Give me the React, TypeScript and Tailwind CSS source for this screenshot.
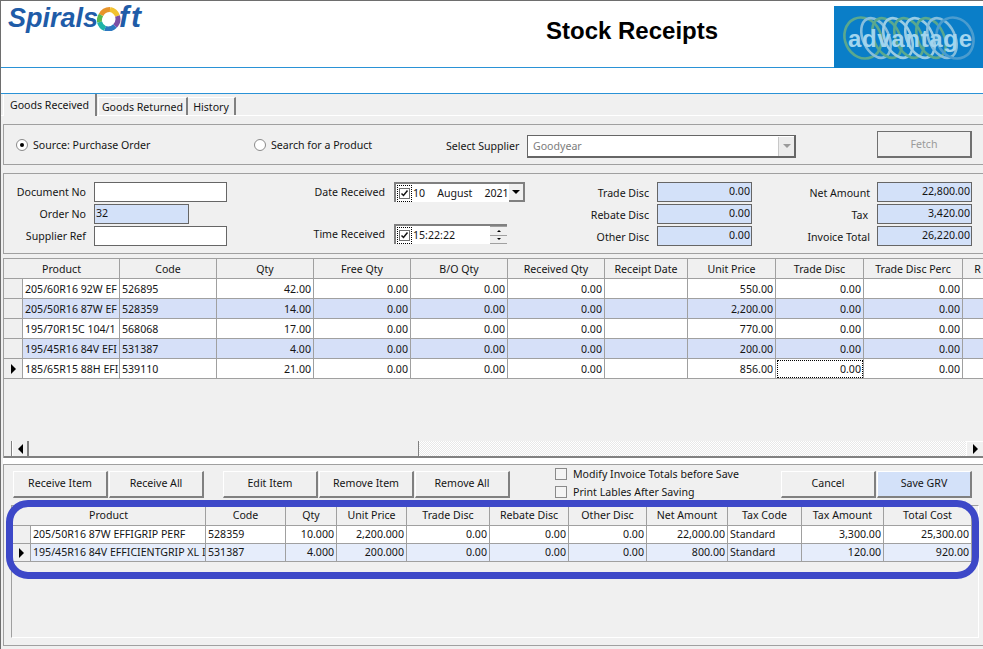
import React from "react";

const BTN =
  "h-[27px] w-[95px] shrink-0 border-t border-l border-t-white border-l-white border-r-2 border-b-2 border-r-[#808080] border-b-[#808080] flex items-center justify-center pb-[2px]";

function Btn({ label, blue, className = "" }: { label: string; blue?: boolean; className?: string }) {
  return <div className={`${BTN} ${blue ? "bg-[#d3e1f9]" : "bg-[#f0f0f0]"} ${className}`}>{label}</div>;
}

function Radio({ on }: { on?: boolean }) {
  return (
    <span className="w-[12px] h-[12px] rounded-full bg-white border border-[#8a8a8a] flex items-center justify-center shrink-0">
      {on && <span className="w-[4px] h-[4px] rounded-full bg-black" />}
    </span>
  );
}

function Check() {
  return (
    <span className="relative w-[15px] h-[17px] flex items-center justify-center border border-dotted border-black shrink-0">
      <span className="w-[11px] h-[11px] border border-[#6e6e6e] bg-white flex items-center justify-center">
        <svg width="9" height="9" viewBox="0 0 9 9">
          <path d="M1.5 4.5 L3.5 6.5 L7.5 1.5" fill="none" stroke="#111" strokeWidth="1.5" />
        </svg>
      </span>
    </span>
  );
}

function Field({ w, blue, text, right }: { w: string; blue?: boolean; text?: string; right?: boolean }) {
  return (
    <div
      className={`${w} h-[20px] border border-[#666] ${blue ? "bg-[#d3e1f9]" : "bg-white"} ${
        right ? "text-right pr-[1px]" : "pl-[1px]"
      } leading-[16px]`}
    >
      {text}
    </div>
  );
}

function SpiralLogo() {
  return (
    <div className="flex items-start font-['Liberation_Sans'] font-bold italic text-[27px] leading-[32px] text-[#1f5ca8]">
      <span>Spirals</span>
      <svg width="24" height="24" viewBox="0 0 24 24" className="mt-[5px] -ml-[1px] shrink-0">
        <g fill="none" strokeWidth="5">
          <path d="M4 8 A10 10 0 0 1 13 2.5" stroke="#e8942a" />
          <path d="M13 2.5 A10 10 0 0 1 20.5 9" stroke="#f2c230" />
          <path d="M20.5 9 A10 10 0 0 1 18 19" stroke="#7a4fa6" />
          <path d="M18 19 A10 10 0 0 1 8 21.5" stroke="#2c78c0" />
          <path d="M8 21.5 A10 10 0 0 1 2.5 15" stroke="#1eb3a8" />
          <path d="M2.5 15 A10 10 0 0 1 4 8" stroke="#58b84e" />
        </g>
      </svg>
      <span className="text-[30px] tracking-[2px] -ml-[2px] -mt-[1px]">ft</span>
    </div>
  );
}

function AdvantageLogo() {
  const rings = [
    { x: 29, rx: 18, c: "#5aa88e" },
    { x: 42, rx: 13, c: "#86bedc" },
    { x: 53, rx: 13, c: "#5aa88e" },
    { x: 64, rx: 13, c: "#9accE4" },
    { x: 75, rx: 13, c: "#5aa88e" },
    { x: 86, rx: 13, c: "#9accE4" },
    { x: 97, rx: 13, c: "#5aa88e" },
    { x: 108, rx: 13, c: "#86bedc" },
    { x: 121, rx: 18, c: "#4a9ccf" },
  ];
  return (
    <svg width="149" height="62" viewBox="0 0 149 62" className="block bg-[#0a7ec8] shrink-0">
      {rings.map((r) => (
        <ellipse
          key={r.x}
          cx={r.x}
          cy="32"
          rx={r.rx}
          ry="21"
          fill="none"
          stroke={r.c}
          strokeWidth="2.6"
          transform={`rotate(-25 ${r.x} 32)`}
        />
      ))}
      <text
        x="14"
        y="41"
        textLength="124"
        fontFamily="Liberation Sans"
        fontWeight="700"
        fontSize="24"
        fill="#a2d5ee"
      >
        advantage
      </text>
    </svg>
  );
}

const topHead = [
  "Code",
  "Qty",
  "Free Qty",
  "B/O Qty",
  "Received Qty",
  "Receipt Date",
  "Unit Price",
  "Trade Disc",
  "Trade Disc Perc",
  "R",
];

const topRows = [
  ["205/60R16 92W EF", "526895", "42.00", "550.00"],
  ["205/50R16 87W EF", "528359", "14.00", "2,200.00"],
  ["195/70R15C 104/1", "568068", "17.00", "770.00"],
  ["195/45R16 84V EFI", "531387", "4.00", "200.00"],
  ["185/65R15 88H EFI", "539110", "21.00", "856.00"],
];

const CELL = "border-r border-b border-[#a0a0a0] overflow-hidden whitespace-nowrap flex items-center";
const TOPCOLS = "grid grid-cols-[19px_97px_97px_97px_97px_97px_97px_83px_88px_88px_99px_30px]";
const BOTCOLS = "grid grid-cols-[19px_175px_80px_51px_70px_83px_79px_78px_81px_74px_82px_88px]";

function Arrow({ className = "" }: { className?: string }) {
  return <span className={`w-0 h-0 border-y-[5px] border-y-transparent border-l-[5px] border-l-black ${className}`} />;
}

function TopGrid() {
  return (
    <div className="h-[200px] ml-[3px] border-l border-t border-[#a0a0a0] flex flex-col overflow-hidden">
      <div className={`${TOPCOLS} h-[20px] shrink-0 w-[990px]`}>
        <div className={`${CELL} col-span-2 justify-center`}>Product</div>
        {topHead.map((h) => (
          <div key={h} className={`${CELL} justify-center`}>
            {h}
          </div>
        ))}
      </div>
      {topRows.map((r, i) => {
        const bg = i % 2 ? "bg-[#d6e0f8]" : "bg-white";
        const num = `${CELL} ${bg} justify-end pr-[2px]`;
        return (
          <div key={r[1]} className={`${TOPCOLS} h-[20px] shrink-0 w-[990px]`}>
            <div className={`${CELL} justify-center bg-[#f0f0f0]`}>{i === 4 && <Arrow />}</div>
            <div className={`${CELL} ${bg} pl-[2px]`}>{r[0]}</div>
            <div className={`${CELL} ${bg} pl-[2px]`}>{r[1]}</div>
            <div className={num}>{r[2]}</div>
            <div className={num}>0.00</div>
            <div className={num}>0.00</div>
            <div className={num}>0.00</div>
            <div className={num} />
            <div className={num}>{r[3]}</div>
            <div className={`${num} ${i === 4 ? "outline-1 outline-dotted outline-black -outline-offset-2" : ""}`}>0.00</div>
            <div className={num}>0.00</div>
            <div className={num} />
          </div>
        );
      })}
      <div className="flex-1" />
      <div className="h-[17px] shrink-0 flex border-b-2 border-[#808080]">
        <div className="w-[8px] border-r border-[#808080] bg-[#f0f0f0]" />
        <div className="w-[17px] border-l border-l-white border-r-2 border-r-[#808080] bg-[#f0f0f0] flex items-center justify-center">
          <Arrow className="rotate-180" />
        </div>
        <div className="w-[390px] bg-[#f0f0f0] border-r border-[#808080]" />
        <div className="flex-1 bg-[repeating-conic-gradient(#e8e8e8_0_25%,#ffffff_0_50%)] bg-[length:2px_2px]" />
        <div className="w-[17px] border-l border-l-white border-t border-t-white bg-[#f0f0f0] flex items-center justify-center">
          <Arrow />
        </div>
      </div>
    </div>
  );
}

const botHead = [
  "Code",
  "Qty",
  "Unit Price",
  "Trade Disc",
  "Rebate Disc",
  "Other Disc",
  "Net Amount",
  "Tax Code",
  "Tax Amount",
  "Total Cost",
];

const botRows = [
  ["205/50R16 87W EFFIGRIP PERF", "528359", "10.000", "2,200.000", "0.00", "0.00", "0.00", "22,000.00", "Standard", "3,300.00", "25,300.00"],
  ["195/45R16 84V EFFICIENTGRIP XL I", "531387", "4.000", "200.000", "0.00", "0.00", "0.00", "800.00", "Standard", "120.00", "920.00"],
];

function BottomGrid() {
  return (
    <div className="ml-[7px] mt-[7px] h-[133px] w-[968px] border-l border-t border-l-[#a0a0a0] border-t-[#a0a0a0] border-r border-b border-r-white border-b-white">
      <div className={`${BOTCOLS} h-[20px]`}>
        <div className={`${CELL} col-span-2 justify-center pb-[1px]`}>Product</div>
        {botHead.map((h) => (
          <div key={h} className={`${CELL} justify-center pb-[1px]`}>
            {h}
          </div>
        ))}
      </div>
      {botRows.map((r, i) => {
        const bg = i ? "bg-[#e6edfb]" : "bg-white";
        return (
          <div key={r[1]} className={`${BOTCOLS} h-[18px]`}>
            <div className={`${CELL} justify-center bg-[#f0f0f0]`}>{i === 1 && <Arrow />}</div>
            {r.map((v, j) => {
              const left = j < 2 || j === 8;
              return (
                <div key={j} className={`${CELL} ${bg} pb-[1px] ${left ? "pl-[2px]" : "justify-end pr-[2px]"}`}>
                  {v}
                </div>
              );
            })}
          </div>
        );
      })}
    </div>
  );
}

function LabelField({
  label,
  lw,
  gap,
  value,
}: {
  label: string;
  lw: string;
  gap: string;
  value: string;
}) {
  return (
    <div className="flex items-center h-[20px]">
      <span className={`${lw} text-right pt-[2px]`}>{label}</span>
      <span className={gap} />
      <Field w="w-[95px]" blue right text={value} />
    </div>
  );
}

export default function App() {
  return (
    <div className="relative w-[983px] h-[649px] overflow-hidden bg-[#f0f0f0] border-t border-[#6e6e6e] text-[10.6px] leading-[14px] text-[#151515] font-['Noto_Sans',sans-serif]">
      <div className="absolute left-0 top-0 bottom-0 w-[1px] bg-[#6e6e6e] z-10" />
      {/* header */}
      <header className="h-[67px] bg-white border-b border-[#2a92d6] flex items-start">
        <div className="w-[546px] pl-[8px] pt-[1px] shrink-0">
          <SpiralLogo />
        </div>
        <div className="w-[288px] shrink-0 pt-[16px] font-['Liberation_Sans'] font-bold text-[24px] leading-[28px] text-black">
          Stock Receipts
        </div>
        <div className="mt-[5px] h-[62px]">
          <AdvantageLogo />
        </div>
      </header>
      <div className="h-[26px] bg-white border-b border-[#2a92d6]" />

      {/* tabs */}
      <div className="h-[22px] flex items-end border-b border-white pl-[3px]">
        <div className="w-[94px] h-[22px] -mb-[1px] bg-[#f0f0f0] border-r-2 border-r-[#808080] border-l border-l-white flex items-center justify-center pb-[1px]">
          Goods Received
        </div>
        <div className="ml-[1px] w-[90px] h-[18px] border-r-2 border-r-[#808080] border-l border-l-white border-t border-t-white flex items-center justify-center">
          Goods Returned
        </div>
        <div className="w-[48px] h-[18px] border-r-2 border-r-[#808080] border-t border-t-white flex items-center justify-center">
          History
        </div>
      </div>

      {/* source panel */}
      <section className="mt-[8px] ml-[3px] h-[41px] border-l border-y border-[#a0a0a0] flex items-start">
        <div className="w-[238px] ml-[12px] mt-[13px] flex items-center gap-[5px] shrink-0">
          <Radio on />
          <span>Source: Purchase Order</span>
        </div>
        <div className="w-[192px] mt-[13px] flex items-center gap-[5px] shrink-0">
          <Radio />
          <span>Search for a Product</span>
        </div>
        <div className="w-[81px] mt-[14px] shrink-0">Select Supplier</div>
        <div className="w-[269px] h-[23px] mt-[10px] shrink-0 border border-[#666] border-r-2 border-b-2 bg-white flex items-center">
          <span className="flex-1 pl-[5px] text-[#7c7c7c]">Goodyear</span>
          <span className="w-[16px] h-[19px] bg-[#ececec] border-l border-[#c8c8c8] flex items-center justify-center">
            <span className="w-0 h-0 border-x-[4px] border-x-transparent border-t-[4px] border-t-[#9a9a9a]" />
          </span>
        </div>
        <div className="ml-[81px] mt-[6px] w-[95px] h-[27px] shrink-0 border border-[#707070] border-r-2 border-b-2 flex items-center justify-center text-[#9a9a9a]">
          Fetch
        </div>
      </section>

      {/* form panel */}
      <section className="mt-[8px] ml-[3px] h-[81px] border-l border-y border-[#a0a0a0] flex items-start pt-[8px]">
        <div className="w-[223px] shrink-0 flex flex-col gap-[2px]">
          {["Document No", "Order No", "Supplier Ref"].map((l, i) => (
            <div key={l} className="flex items-center h-[20px]">
              <span className="w-[82px] text-right">{l}</span>
              <span className="w-[8px]" />
              {i === 1 ? <Field w="w-[95px]" blue text="32" /> : <Field w="w-[133px]" />}
            </div>
          ))}
        </div>
        <div className="w-[298px] shrink-0">
          <div className="flex items-center h-[20px]">
            <span className="w-[158px] text-right">Date Received</span>
            <span className="w-[9px]" />
            <div className="w-[131px] h-[20px] border-t-2 border-l-2 border-[#808080] bg-white flex items-center pl-[1px]">
              <Check />
              <span className="ml-[1px]">10</span>
              <span className="ml-[12px]">August</span>
              <span className="ml-[12px]">2021</span>
              <span className="ml-auto w-[17px] h-[18px] bg-[#f0f0f0] border-r-2 border-b-2 border-[#808080] flex items-center justify-center">
                <span className="w-0 h-0 border-x-[4px] border-x-transparent border-t-[4px] border-t-black" />
              </span>
            </div>
          </div>
          <div className="flex items-center h-[20px] mt-[22px]">
            <span className="w-[158px] text-right">Time Received</span>
            <span className="w-[9px]" />
            <div className="w-[113px] h-[20px] border-t-2 border-l-2 border-[#808080] bg-white flex items-center pl-[1px]">
              <Check />
              <span className="ml-[1px]">15:22:22</span>
              <span className="ml-auto w-[17px] h-[18px] flex flex-col border-y border-[#a0a0a0]">
                <span className="flex-1 bg-[#f0f0f0] border-b border-[#a0a0a0] flex items-center justify-center">
                  <span className="w-0 h-0 border-x-[2px] border-x-transparent border-b-[2px] border-b-black" />
                </span>
                <span className="flex-1 bg-[#f0f0f0] flex items-center justify-center">
                  <span className="w-0 h-0 border-x-[2px] border-x-transparent border-t-[2px] border-t-black" />
                </span>
              </span>
            </div>
          </div>
        </div>
        <div className="w-[227px] shrink-0 flex flex-col gap-[2px]">
          <LabelField label="Trade Disc" lw="w-[124px]" gap="w-[8px]" value="0.00" />
          <LabelField label="Rebate Disc" lw="w-[124px]" gap="w-[8px]" value="0.00" />
          <LabelField label="Other Disc" lw="w-[124px]" gap="w-[8px]" value="0.00" />
        </div>
        <div className="w-[220px] shrink-0 flex flex-col gap-[2px]">
          <LabelField label="Net Amount" lw="w-[118px]" gap="w-[7px]" value="22,800.00" />
          <LabelField label="Tax" lw="w-[116px]" gap="w-[9px]" value="3,420.00" />
          <LabelField label="Invoice Total" lw="w-[118px]" gap="w-[7px]" value="26,220.00" />
        </div>
      </section>

      <div className="h-[4px]" />
      <TopGrid />
      <div className="h-[6px] bg-white ml-[3px]" />

      {/* bottom panel */}
      <section className="ml-[3px] h-[182px] border-l border-y border-[#a0a0a0] pt-[6px]">
        <div className="flex h-[27px] pl-[9px]">
          <Btn label="Receive Item" />
          <Btn label="Receive All" className="ml-[1px]" />
          <Btn label="Edit Item" className="ml-[19px]" />
          <Btn label="Remove Item" className="ml-[1px]" />
          <Btn label="Remove All" className="ml-[1px]" />
          <div className="ml-[45px] w-[226px] shrink-0 flex flex-col gap-[5px] -mt-[4px]">
            {["Modify Invoice Totals before Save", "Print Lables After Saving"].map((t) => (
              <div key={t} className="flex items-center gap-[6px] h-[13px]">
                <span className="w-[12px] h-[12px] border border-[#8a8a8a] bg-[#f4f4f4] shrink-0" />
                <span>{t}</span>
              </div>
            ))}
          </div>
          <Btn label="Cancel" />
          <Btn label="Save GRV" blue className="ml-[1px]" />
        </div>
        <BottomGrid />
      </section>

      {/* highlight drawn over the lower grid */}
      <div className="absolute left-[6px] top-[499px] w-[973px] h-[79px] rounded-[22px] border-[7px] border-[#3d48c8] pointer-events-none" />
    </div>
  );
}
